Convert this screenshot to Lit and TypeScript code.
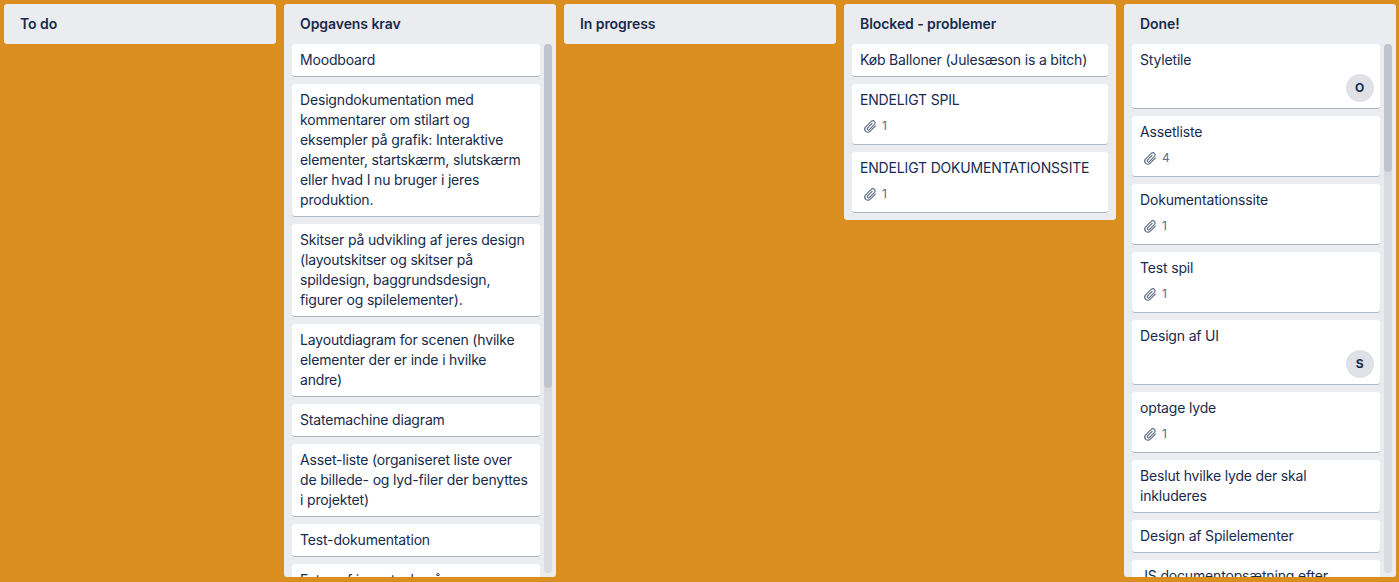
import { LitElement, html, css, svg, nothing } from "lit";
import { customElement, property } from "lit/decorators.js";

interface Card {
  lines: string[];
  attachments?: number;
  member?: string;
}

interface Column {
  title: string;
  cards: Card[];
  thumb?: number;
}

const columns: Column[] = [
  { title: "To do", cards: [] },
  {
    title: "Opgavens krav",
    thumb: 344,
    cards: [
      { lines: ["Moodboard"] },
      {
        lines: [
          "Designdokumentation med",
          "kommentarer om stilart og",
          "eksempler på grafik: Interaktive",
          "elementer, startskærm, slutskærm",
          "eller hvad I nu bruger i jeres",
          "produktion.",
        ],
      },
      {
        lines: [
          "Skitser på udvikling af jeres design",
          "(layoutskitser og skitser på",
          "spildesign, baggrundsdesign,",
          "figurer og spilelementer).",
        ],
      },
      {
        lines: [
          "Layoutdiagram for scenen (hvilke",
          "elementer der er inde i hvilke",
          "andre)",
        ],
      },
      { lines: ["Statemachine diagram"] },
      {
        lines: [
          "Asset-liste (organiseret liste over",
          "de billede- og lyd-filer der benyttes",
          "i projektet)",
        ],
      },
      { lines: ["Test-dokumentation"] },
      { lines: ["Fotos af jeres tavle på"] },
    ],
  },
  { title: "In progress", cards: [] },
  {
    title: "Blocked - problemer",
    cards: [
      { lines: ["Køb Balloner (Julesæson is a bitch)"] },
      { lines: ["ENDELIGT SPIL"], attachments: 1 },
      { lines: ["ENDELIGT DOKUMENTATIONSSITE"], attachments: 1 },
    ],
  },
  {
    title: "Done!",
    thumb: 128,
    cards: [
      { lines: ["Styletile"], member: "O" },
      { lines: ["Assetliste"], attachments: 4 },
      { lines: ["Dokumentationssite"], attachments: 1 },
      { lines: ["Test spil"], attachments: 1 },
      { lines: ["Design af UI"], member: "S" },
      { lines: ["optage lyde"], attachments: 1 },
      { lines: ["Beslut hvilke lyde der skal", "inkluderes"] },
      { lines: ["Design af Spilelementer"] },
      { lines: ["JS documentopsætning efter"] },
    ],
  },
];

const clip = svg`<path
  fill="none"
  stroke="currentColor"
  stroke-width="1.15"
  stroke-linecap="round"
  stroke-linejoin="round"
  d="M10.1 5.4 5.6 9.9a1.2 1.2 0 0 0 1.7 1.7l5.3-5.3a2.2 2.2 0 0 0-3.1-3.1L3.7 8.9a3.1 3.1 0 0 0 4.4 4.4l5.2-5.2"
/>`;

@customElement("board-card")
export class BoardCard extends LitElement {
  @property({ attribute: false }) card!: Card;

  static styles = css`
    :host {
      display: block;
      flex: none;
      box-sizing: border-box;
      padding: 6px 6px 6px 8px;
      border-radius: 3px;
      background: #fff;
      box-shadow: 0 1px 0 #b0b7c8;
    }
    .line {
      display: block;
      white-space: nowrap;
    }
    .badges {
      display: flex;
      align-items: center;
      gap: 4px;
      height: 20px;
      margin: 6px 0 2px 2px;
      color: #5e6c84;
      font-size: 12px;
      letter-spacing: 0;
    }
    .clip {
      width: 16px;
      height: 16px;
    }
    .members {
      display: flex;
      justify-content: flex-end;
      margin-top: 4px;
    }
    .avatar {
      box-sizing: border-box;
      width: 28px;
      height: 28px;
      padding-right: 1px;
      border-radius: 50%;
      background: #dfe1e6;
      font-size: 12px;
      font-weight: 700;
      line-height: 28px;
      text-align: center;
    }
  `;

  render() {
    const { lines, attachments, member } = this.card;
    return html`
      ${lines.map((line) => html`<span class="line">${line}</span>`)}
      ${attachments
        ? html`<div class="badges">
            <svg class="clip" viewBox="0 0 16 16">${clip}</svg>
            <span>${attachments}</span>
          </div>`
        : nothing}
      ${member
        ? html`<div class="members"><div class="avatar">${member}</div></div>`
        : nothing}
    `;
  }
}

@customElement("board-column")
export class BoardColumn extends LitElement {
  @property({ attribute: false }) column!: Column;

  static styles = css`
    :host {
      display: flex;
      flex-direction: column;
      flex: none;
      box-sizing: border-box;
      width: 272px;
      max-height: 100%;
      overflow: hidden;
      border-radius: 3px;
      background: #ebecf0;
    }
    .title {
      flex: none;
      height: 20px;
      margin: 0;
      padding: 10px 16px;
      font-size: 14px;
      font-weight: 600;
      letter-spacing: -0.07px;
    }
    .body {
      display: flex;
      min-height: 0;
      gap: 4px;
      padding: 0 8px;
    }
    .scrolling {
      padding-right: 4px;
    }
    .cards {
      display: flex;
      flex: 1;
      flex-direction: column;
      gap: 8px;
      min-width: 0;
      padding-bottom: 8px;
      overflow: hidden;
    }
    .track {
      flex: none;
      width: 8px;
      margin-bottom: 4px;
      border-radius: 4px;
      background: #dadbe2;
    }
    .thumb {
      border-radius: 4px;
      background: #bfc4ce;
    }
  `;

  render() {
    const { title, cards, thumb } = this.column;
    return html`
      <h2 class="title">${title}</h2>
      ${cards.length
        ? html`<div class="body ${thumb ? "scrolling" : ""}">
            <div class="cards">
              ${cards.map((card) => html`<board-card .card=${card}></board-card>`)}
            </div>
            ${thumb
              ? html`<div class="track">
                  <div class="thumb" style="height:${thumb}px"></div>
                </div>`
              : nothing}
          </div>`
        : nothing}
    `;
  }
}

@customElement("app-root")
export class AppRoot extends LitElement {
  static styles = css`
    :host {
      display: flex;
      align-items: flex-start;
      gap: 8px;
      box-sizing: border-box;
      height: 582px;
      padding: 4px 4px 5px;
      overflow: hidden;
      background: #d98e1d;
      color: #172b4d;
      font: 14px/20px Inter, sans-serif;
      letter-spacing: -0.17px;
    }
  `;

  render() {
    return columns.map((column) => html`<board-column .column=${column}></board-column>`);
  }
}
